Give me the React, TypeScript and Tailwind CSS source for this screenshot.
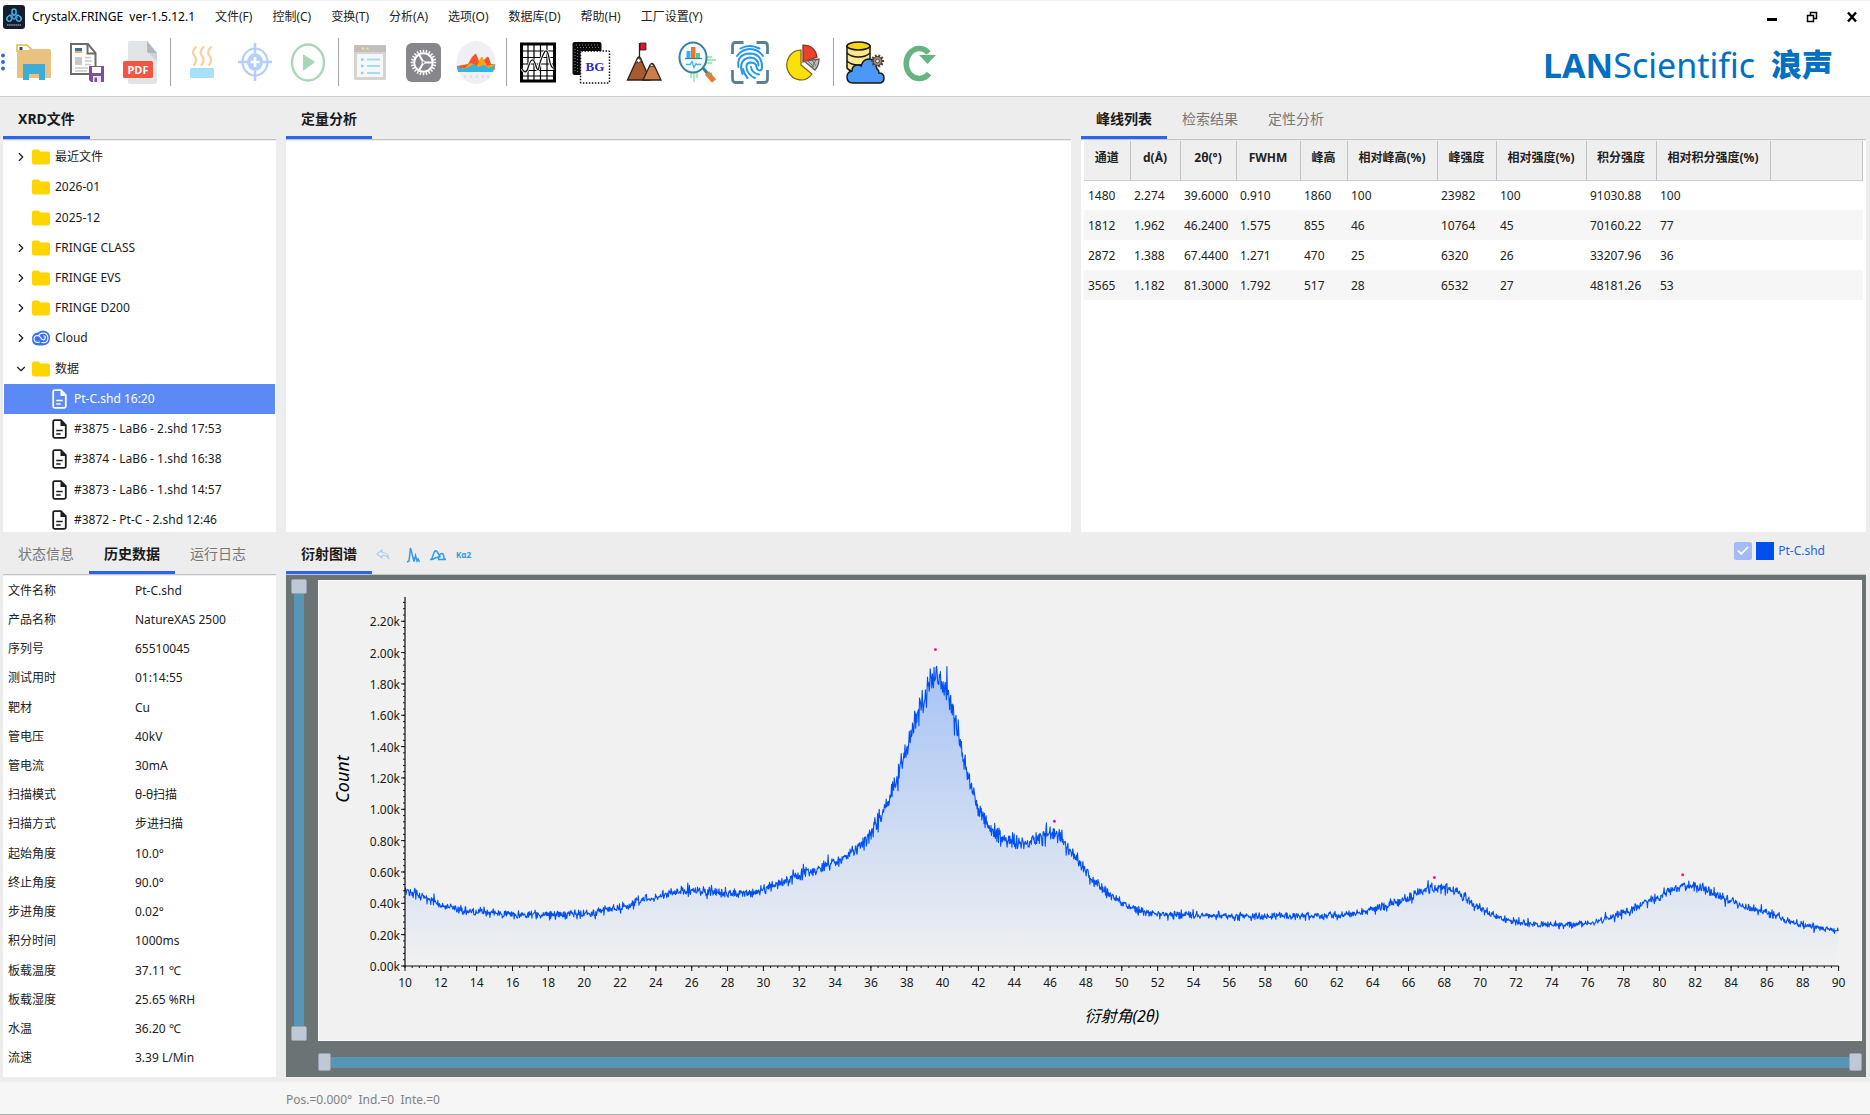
import { useState } from "react";
import type { ReactNode } from "react";
import { Check, ChevronDown, ChevronRight, Fingerprint } from "lucide-react";

/* ---------- toolbar icons (40 x 44 drawing area) ---------- */

function Ico({ children }: { children: ReactNode }) {
  return (
    <svg viewBox="0 0 40 44" className="h-11 w-10" aria-hidden="true">
      {children}
    </svg>
  );
}

const cog = (cx: number, cy: number, r: number, teeth: number, len: number) =>
  Array.from({ length: teeth }, (_, i) => {
    const a = (i / teeth) * Math.PI * 2;
    return `M${cx + Math.cos(a) * r} ${cy + Math.sin(a) * r}L${cx + Math.cos(a) * (r + len)} ${cy + Math.sin(a) * (r + len)}`;
  }).join("");

const OpenIcon = () => (
  <Ico>
    <path d="M3 12V5h10l6 6" fill="#fff" stroke="#e3bd3c" strokeWidth="1.6" />
    <path d="M5.500 7h3v3h-3z" fill="#1d4f86" />
    <path d="M3 10h10l5-1h16q3 0 3 2v26q0 1-1 1H3z" fill="#e8c27e" />
    <path d="M9 40V24h22v16h-6v-6H15v6z" fill="#3badd6" />
  </Ico>
);
const SaveIcon = () => (
  <Ico>
    <path d="M4 4h17l7.500 9v21H4z" fill="#fff" stroke="#6c6c6c" strokeWidth="2" />
    <path d="M20.500 4v9.500H29" fill="none" stroke="#6c6c6c" strokeWidth="2" />
    <path d="M8 8h7v4H8z" fill="#3a6ea5" />
    <path d="M8 11h7v2H8z" fill="#e9b55a" />
    <path d="M8 17h7v8H8z" fill="#c9c9c9" />
    <path d="M18 17.500h6M18 21h7M18 24.500h6M8 28h13M8 31h12" stroke="#c9c9c9" strokeWidth="1.400" />
    <path d="M22 26h15v16H24l-2-2z" fill="#7d4fa3" />
    <path d="M25 27h9v6h-9z" fill="#fff" />
    <path d="M26 36h8v6h-8z" fill="#efe6f5" />
    <path d="M27.500 37.500h2.500V42h-2.500z" fill="#7d4fa3" />
  </Ico>
);
const PdfIcon = () => (
  <Ico>
    <path d="M10 1h17l10 12v29q0 2-2 2H10q-2 0-2-2V3q0-2 2-2z" fill="#e2e5e7" />
    <path d="M27 1l10 12h-8q-2 0-2-2z" fill="#b0b7bd" />
    <path d="M29 13l8 9v-9z" fill="#cad1d8" />
    <rect x="3" y="21" width="30" height="17" rx="1.500" fill="#f15642" />
    <text x="18" y="33.500" textAnchor="middle" fontSize="11" fontWeight="700" fill="#fff" fontFamily="Noto Sans, sans-serif">PDF</text>
  </Ico>
);
const HeatIcon = () => (
  <Ico>
    <g fill="none" stroke="#fcd09a" strokeWidth="2.200" strokeLinecap="round">
      <path d="M14 7q-5 5-1.500 9t-.5 9" />
      <path d="M21.500 7q-5 5-1.500 9t-.5 9" />
      <path d="M29 7q-5 5-1.500 9t-.5 9" />
    </g>
    <rect x="8" y="28" width="24" height="10" rx="1.500" fill="#a6e1fb" />
  </Ico>
);
const TargetIcon = () => (
  <Ico>
    <g stroke="#b3d0fd" fill="none">
      <ellipse cx="20" cy="22" rx="12.500" ry="13.500" strokeWidth="2.200" />
      <path d="M20 3v10M20 31v10M3 22h9M28 22h9" strokeWidth="2.600" />
    </g>
    <ellipse cx="20" cy="22" rx="8" ry="9" fill="#b3d0fd" />
    <path d="M20 17v10M15.500 22h9" stroke="#fff" strokeWidth="2.600" />
  </Ico>
);
const PlayIcon = () => (
  <Ico>
    <ellipse cx="20" cy="22.500" rx="16" ry="18" fill="none" stroke="#a9d8b8" strokeWidth="2.400" />
    <path d="M15.500 15l11 7-11 8z" fill="#a4d8b6" stroke="#a4d8b6" strokeLinejoin="round" />
  </Ico>
);
const ListIcon = () => (
  <Ico>
    <rect x="4" y="5" width="32" height="35" rx="1.500" fill="#d7d3d0" />
    <path d="M4 6.500Q4 5 5.500 5h29Q36 5 36 6.500V12H4z" fill="#c2bfbf" />
    <circle cx="8.500" cy="8.500" r="1.300" fill="#f5a3a0" />
    <circle cx="13" cy="8.500" r="1.300" fill="#f7e08a" />
    <circle cx="17.500" cy="8.500" r="1.300" fill="#d9e98a" />
    <path d="M7 14h26v23H7z" fill="#f5f7f9" />
    <path d="M17 19.500h13M17 26h13M17 33h13" stroke="#a9dcea" strokeWidth="2" />
    <path d="M11 19.500h2.500M11 26h2.500M11 33h2.500" stroke="#8fcdf0" strokeWidth="2.400" />
  </Ico>
);
const GearIcon = () => (
  <Ico>
    <rect x="3" y="3" width="35" height="39" rx="6" fill="#87868c" />
    <path d={cog(20.5, 22.5, 10, 24, 2.8)} stroke="#fff" strokeWidth="1.500" />
    <circle cx="20.500" cy="22.500" r="9.300" fill="none" stroke="#fff" strokeWidth="2" />
    <path d="M20.500 22.500h9M20.500 22.500l-4.500-8M20.500 22.500l-4.500 8" stroke="#fff" strokeWidth="2" />
    <circle cx="20.500" cy="22.500" r="1.500" fill="#87868c" stroke="#fff" />
  </Ico>
);
const AreaIcon = () => (
  <Ico>
    <ellipse cx="20" cy="22.500" rx="19.500" ry="21.500" fill="#eff0f4" />
    <path d="M1 26l6-1 5-1 4-7 3-3q1-1 2 2l3 8 3-3 4-4q1-1 2 1l2 6 4 0v5L20 31 2 30z" fill="#f4552b" />
    <path d="M1 28l8 0 4-4 3-1 4 5 5-11q1-1 2 1l4 8 3-1 5-1v6H2z" fill="#ffa412" />
    <path d="M1 26l6 3 6-2 5-3 4 3 6-2 5 3 6-3q0 3-2 7H2q-1-4-1-6z" fill="#33b5e0" />
    <path d="M9 35v3M15 35v3M21 35v3M27 35v3M32 35v3" stroke="#cfd1d8" />
  </Ico>
);
const GridIcon = () => (
  <Ico>
    <rect x="3.500" y="4" width="33" height="37" fill="#fff" stroke="#000" strokeWidth="3" />
    <path d="M10 4v37M16 4v37M22.500 4v37M29 4v37M4 11h32M4 17.500h32M4 24h32M4 30.500h32M4 36h32" stroke="#000" strokeWidth="1.200" />
    <path d="M4 29q4 6 6-1t4-8 4 6 3 1 5-14q3-6 5 5t5 10" fill="none" stroke="#fff" strokeWidth="2.800" />
    <path d="M4 29q4 6 6-1t4-8 4 6 3 1 5-14q3-6 5 5t5 10" fill="none" stroke="#111" strokeWidth="1.300" />
  </Ico>
);
const BgIcon = () => (
  <Ico>
    <rect x="1.500" y="2" width="29" height="33" rx="2" fill="#0a0a0a" />
    <path d="M5 5h24M6 7.500h23M4 9v24M6.500 10v22" stroke="#9a9a9a" strokeWidth=".8" strokeDasharray="1 2" />
    <rect x="9.500" y="11" width="29" height="32" rx="1" fill="#fff" stroke="#111" strokeWidth="1.500" strokeDasharray="1.500 1.500" />
    <text x="24" y="31" textAnchor="middle" fontSize="13" fontWeight="700" fill="#2a2ad8" fontFamily="Liberation Serif, serif">BG</text>
  </Ico>
);
const PeakIcon = () => (
  <Ico>
    <path d="M15.500 18V3" stroke="#222" strokeWidth="1.300" />
    <path d="M16 3h6v7h-6z" fill="#e8112d" stroke="#222" strokeWidth=".8" />
    <path d="M3.500 40L13 19q2-4 4 0l9 21z" fill="#a95b2c" stroke="#2b211c" strokeWidth="1.300" />
    <path d="M11.500 22.500q3-8 6.500 0l-2-1-1.500 2-1-2z" fill="#fff" stroke="#2b211c" strokeWidth=".8" />
    <path d="M19 40l7-15q2-3 4 0l7 15z" fill="#d07d4c" stroke="#2b211c" strokeWidth="1.300" />
    <path d="M25.500 27q2-6 5 0l-2.500-1z" fill="#fff" stroke="#2b211c" strokeWidth=".8" />
  </Ico>
);
const SearchChartIcon = () => (
  <Ico>
    <path d="M29 17h6M30 20h9M29 23h6M14 33v5M17 33v9M20 33v5" stroke="#7fe3a4" strokeWidth="1.300" />
    <path d="M26 28l5 6" stroke="#3d7e9f" strokeWidth="3" />
    <path d="M30 33l7 8" stroke="#f47a2b" strokeWidth="5.500" />
    <path d="M31 37l4-4" stroke="#48c77a" strokeWidth="1.300" />
    <ellipse cx="16" cy="17.500" rx="13.500" ry="15" fill="#f1faff" stroke="#3d7e9f" strokeWidth="2" />
    <path d="M9.500 11h4v7h-4z" fill="#2fb6e8" />
    <path d="M14 7h4.500v11H14z" fill="#f4702b" />
    <path d="M19 13h4v5h-4z" fill="#4fd08b" />
    <path d="M8 18.500h17" stroke="#3d7e9f" strokeWidth="1.200" />
    <path d="M9 24.500h4l2-3 2 6 2-4 1 1h4" fill="none" stroke="#3db4e6" strokeWidth="1.300" />
  </Ico>
);
const FingerIcon = () => (
  <Ico>
    <g fill="none" stroke="#5d7f92" strokeWidth="2.800">
      <path d="M2.500 14V6q0-3.500 3-3.500h8M26.500 2.500h8q3 0 3 3.500v8M37.500 30v8.500q0 4-3 4h-8M13.500 42.500h-8q-3 0-3-4V30" />
    </g>
    <g fill="none" stroke="#2196f3" strokeWidth="2" strokeLinecap="round">
      <path d="M10.500 8.500q9-5 19 0" />
      <path d="M7 16q5-7 13-7t13 7" />
      <path d="M8.500 27q-2-13 11.500-13.500Q32 14 32 27q0 3-2 3.500-3 0-3.500-4Q26 22.500 20 22.500q-4 .5-3.500 5Q17.500 35 25 38" />
      <path d="M12.500 34q-2-6-1-10 2-6 8.500-6.500 8 .5 8.500 8" />
      <path d="M17.500 38q-3.500-4-4.500-9" />
      <path d="M21 27q.5 6 8 7.500" />
    </g>
  </Ico>
);
const PieIcon = () => (
  <Ico>
    <path d="M18 25V10A14 15 0 1 0 29 34z" fill="#fbe10a" stroke="#7a5c10" strokeWidth="1.200" />
    <path d="M20 22V5q12 0 14 12z" fill="#e8432a" stroke="#8a2a1a" strokeWidth="1.200" />
    <path d="M21 21l15-2q0 7-4 11z" fill="#a9c3cc" stroke="#7a5648" strokeWidth="1.300" />
    <path d="M25 21l6 6M29 20l4 6M33 20l-4 7" stroke="#7a5648" strokeWidth=".8" />
  </Ico>
);
const CloudDbIcon = () => (
  <Ico>
    <path d="M2 6v22q3 4 11 4t12-4V6z" fill="#fbe88e" stroke="#161616" strokeWidth="1.500" />
    <path d="M2 13q4 4 11.500 4T25 13M2 21q4 4 11.500 4T25 21" fill="none" stroke="#161616" strokeWidth="1.300" />
    <ellipse cx="13.500" cy="6" rx="11.500" ry="4" fill="#f7d417" stroke="#161616" strokeWidth="1.500" />
    <path d="M8 43q-6 0-6-6 0-5 5-6 0-6 6-6 2 0 3 1 2-7 8-7 7 0 8 10 2 1 2 4 5 0 5 5t-5 5z" fill="#4a98f7" stroke="#161616" strokeWidth="1.500" />
    <path d={cog(32.5, 21, 4, 10, 2.6)} stroke="#55463a" strokeWidth="2" />
    <circle cx="32.500" cy="21" r="4.500" fill="#a08b76" stroke="#3d3229" />
    <circle cx="32.500" cy="21" r="1.800" fill="#f5ede4" stroke="#3d3229" strokeWidth=".8" />
  </Ico>
);
const RefreshIcon = () => (
  <Ico>
    <path d="M31 33.500A13 15 0 1 1 30.500 13" fill="none" stroke="#67b57e" strokeWidth="5.600" />
    <path d="M21 15h17l-8.500 9z" fill="#67b57e" />
  </Ico>
);

type Tool = { label: string; icon: ReactNode };
const toolGroups: Tool[][] = [
  [
    { label: "打开", icon: <OpenIcon /> },
    { label: "保存", icon: <SaveIcon /> },
    { label: "导出PDF", icon: <PdfIcon /> },
  ],
  [
    { label: "预热", icon: <HeatIcon /> },
    { label: "校准", icon: <TargetIcon /> },
    { label: "开始", icon: <PlayIcon /> },
  ],
  [
    { label: "参数", icon: <ListIcon /> },
    { label: "设置", icon: <GearIcon /> },
    { label: "图谱", icon: <AreaIcon /> },
  ],
  [
    { label: "平滑", icon: <GridIcon /> },
    { label: "背景", icon: <BgIcon /> },
    { label: "寻峰", icon: <PeakIcon /> },
    { label: "检索", icon: <SearchChartIcon /> },
    { label: "指纹", icon: <FingerIcon /> },
    { label: "定量", icon: <PieIcon /> },
  ],
  [
    { label: "数据库", icon: <CloudDbIcon /> },
    { label: "刷新", icon: <RefreshIcon /> },
  ],
];

const menus = ["文件(F)", "控制(C)", "变换(T)", "分析(A)", "选项(O)", "数据库(D)", "帮助(H)", "工厂设置(Y)"];

function AppLogo() {
  return (
    <svg viewBox="0 0 22 24" className="h-6 w-[22px]" aria-hidden="true">
      <rect width="22" height="24" rx="3" fill="#141c2e" />
      <g fill="none" stroke="#35c3dc" strokeWidth="1.500" strokeLinejoin="round">
        <path d="M9 8.500V6q0-2 2-2t2 2v2.500l-2 2z" />
        <path d="M9.500 12l-1.500 3.500q-2 1.500-3.500 0t0-3.500l2.500-2z" />
        <path d="M12.500 12l1.500 3.500q2 1.500 3.500 0t0-3.500L15 10z" />
        <path d="M9 9.500h4l1 3-3 1.500-3-1.500z" stroke="#4f8ff0" />
      </g>
      <path d="M4 20h14" stroke="#8d94a3" strokeWidth="1.400" strokeDasharray="1.500 .6" />
    </svg>
  );
}

function Header() {
  return (
    <header className="flex h-[97px] shrink-0 flex-col border-b border-[#cfcfcf] bg-white">
      <div className="flex h-8 items-center border-t border-[#f0f0f0] pl-[3px] pr-3">
        <AppLogo />
        <h1 className="ml-[7px] whitespace-pre text-[12px] text-black">CrystalX.FRINGE  ver-1.5.12.1</h1>
        <nav className="ml-5 flex gap-5">
          {menus.map((m) => (
            <button key={m} type="button" className="text-[12px] text-[#222]">
              {m}
            </button>
          ))}
        </nav>
        <div className="ml-auto flex items-center gap-7">
          <button type="button" aria-label="最小化">
            <svg viewBox="0 0 12 12" className="size-3"><path d="M1 8.500h10" stroke="#000" strokeWidth="3" /></svg>
          </button>
          <button type="button" aria-label="还原">
            <svg viewBox="0 0 12 12" className="size-3" fill="none" stroke="#000" strokeWidth="1.500">
              <path d="M1.500 4.500h6v6h-6zM4.500 4V1.500h6v6H8" />
            </svg>
          </button>
          <button type="button" aria-label="关闭">
            <svg viewBox="0 0 12 12" className="size-3"><path d="M2 1.500l8 9M10 1.500l-8 9" stroke="#000" strokeWidth="2.400" /></svg>
          </button>
        </div>
      </div>
      <div className="flex flex-1 items-center pb-1 pr-[37px]">
        <svg viewBox="0 0 7 20" className="h-5 w-[7px] shrink-0" fill="#2b63f6" aria-hidden="true">
          <circle cx="3" cy="3.500" r="1.900" />
          <circle cx="3" cy="10" r="1.900" />
          <circle cx="3" cy="16.500" r="1.900" />
        </svg>
        {toolGroups.map((group, i) => (
          <div key={i} className="flex items-center">
            {i > 0 && <div className="mx-1 h-12 w-px bg-[#a3a3a3]" />}
            {group.map((t) => (
              <button key={t.label} type="button" aria-label={t.label} className="flex w-[53px] justify-center">
                {t.icon}
              </button>
            ))}
          </div>
        ))}
        <div className="ml-auto flex items-center gap-4 whitespace-nowrap pt-[5px] leading-none text-[#0071c2]">
          <span className="text-[34px]">
            <b className="font-bold">LAN</b>Scientific
          </span>
          <span className="text-[31px] font-black">浪声</span>
        </div>
      </div>
    </header>
  );
}

/* ---------- tab strip ---------- */

function Tabs({ items, initial = 0, children }: { items: string[]; initial?: number; children?: ReactNode }) {
  const [active, setActive] = useState(initial);
  return (
    <div className="flex h-[43px] shrink-0 items-stretch border-b border-[#c3c3c3]" role="tablist">
      {items.map((t, i) => (
        <button
          key={t}
          type="button"
          role="tab"
          aria-selected={i === active}
          onClick={() => setActive(i)}
          className={
            i === active
              ? "border-b-3 border-[#2b63f6] px-[15px] pt-[3px] text-[14px] font-bold text-[#1a1a1a]"
              : "border-b-3 border-transparent px-[15px] pt-[3px] text-[14px] text-[#777]"
          }
        >
          {t}
        </button>
      ))}
      {children}
    </div>
  );
}

/* ---------- file tree ---------- */

type Node = { label: string; kind: "folder" | "cloud" | "file"; arrow?: "right" | "down"; selected?: boolean };
const nodes: Node[] = [
  { label: "最近文件", kind: "folder", arrow: "right" },
  { label: "2026-01", kind: "folder" },
  { label: "2025-12", kind: "folder" },
  { label: "FRINGE CLASS", kind: "folder", arrow: "right" },
  { label: "FRINGE EVS", kind: "folder", arrow: "right" },
  { label: "FRINGE D200", kind: "folder", arrow: "right" },
  { label: "Cloud", kind: "cloud", arrow: "right" },
  { label: "数据", kind: "folder", arrow: "down" },
  { label: "Pt-C.shd 16:20", kind: "file", selected: true },
  { label: "#3875 - LaB6 - 2.shd 17:53", kind: "file" },
  { label: "#3874 - LaB6 - 1.shd 16:38", kind: "file" },
  { label: "#3873 - LaB6 - 1.shd 14:57", kind: "file" },
  { label: "#3872 - Pt-C - 2.shd 12:46", kind: "file" },
];

function NodeIcon({ kind }: { kind: Node["kind"] }) {
  if (kind === "folder")
    return (
      <svg viewBox="0 0 18 16" className="h-4 w-[18px]" aria-hidden="true">
        <path d="M0 2.500Q0 .5 2 .5h4.500L8.500 2.500H16q2 0 2 2v9q0 2-2 2H2q-2 0-2-2z" fill="#ffd500" />
      </svg>
    );
  if (kind === "cloud")
    return (
      <svg viewBox="0 0 18 16" className="h-4 w-[18px]" aria-hidden="true">
        <path d="M6 2.500Q8 .5 11 .5q7 .5 7 7.500t-7 7.500H6Q0 15 0 9t6-6.500z" fill="#3b71f3" />
        <path d="M9.500 12.500q6.500 1 6.500-4.500-.5-5-5-5-3.500.2-4.500 3M8 12q-5.500 1.500-6-3 .2-3.500 3.500-3.500 2 .2 3 2t2.500 2.300 2.200-1.800-1.800-2" fill="none" stroke="#fff" strokeWidth="1.100" />
      </svg>
    );
  return (
    <svg viewBox="0 0 15 20" className="h-5 w-[15px]" aria-hidden="true">
      <path d="M2.500 1.200H9L13.800 6v11.300q0 1.500-1.500 1.500h-9.800q-1.300 0-1.300-1.500V2.700q0-1.500 1.300-1.500z" fill="none" stroke="currentColor" strokeWidth="1.800" />
      <path d="M8.500 1v6H14z" fill="currentColor" />
      <path d="M4.200 11.500h6.500M4.200 15h4.500" stroke="currentColor" strokeWidth="1.500" />
    </svg>
  );
}

function FileTree() {
  return (
    <section className="flex min-h-0 flex-col">
      <Tabs items={["XRD文件"]} />
      <div className="mt-px min-h-0 flex-1 overflow-hidden bg-white px-px pt-px">
        <ul className="grid h-[393px] auto-rows-fr">
          {nodes.map((n) => (
            <li
              key={n.label}
              className={n.selected ? "flex items-center bg-[#5b8af7] text-white" : "flex items-center text-[#1c1c1c]"}
            >
              {n.kind === "file" ? (
                <span className="w-12" />
              ) : (
                <span className="flex w-7 justify-end pr-1">
                  {n.arrow === "right" && <ChevronRight className="size-3.5" strokeWidth={2} />}
                  {n.arrow === "down" && <ChevronDown className="size-3.5" strokeWidth={2} />}
                </span>
              )}
              <NodeIcon kind={n.kind} />
              <span className={n.kind === "file" ? "ml-[7px] text-[12px]" : "ml-[5px] text-[12px]"}>{n.label}</span>
            </li>
          ))}
        </ul>
      </div>
    </section>
  );
}

/* ---------- peak table ---------- */

const columns: [string, string][] = [
  ["通道", "w-[46px]"],
  ["d(Å)", "w-[50px]"],
  ["2θ(°)", "w-[56px]"],
  ["FWHM", "w-[64px]"],
  ["峰高", "w-[47px]"],
  ["相对峰高(%)", "w-[90px]"],
  ["峰强度", "w-[59px]"],
  ["相对强度(%)", "w-[90px]"],
  ["积分强度", "w-[70px]"],
  ["相对积分强度(%)", "w-[114px]"],
];
const peaks = [
  ["1480", "2.274", "39.6000", "0.910", "1860", "100", "23982", "100", "91030.88", "100"],
  ["1812", "1.962", "46.2400", "1.575", "855", "46", "10764", "45", "70160.22", "77"],
  ["2872", "1.388", "67.4400", "1.271", "470", "25", "6320", "26", "33207.96", "36"],
  ["3565", "1.182", "81.3000", "1.792", "517", "28", "6532", "27", "48181.26", "53"],
];

function PeakPanel() {
  return (
    <section className="flex min-h-0 min-w-0 flex-col">
      <Tabs items={["峰线列表", "检索结果", "定性分析"]} />
      <div className="mt-px min-h-0 flex-1 overflow-hidden bg-white px-[3px]">
        <table className="w-full table-fixed border-collapse text-[12px] text-[#222]">
          <thead>
            <tr className="h-[39px] border-b border-[#cfcfcf] bg-[#efefef]">
              {columns.map(([c, w]) => (
                <th key={c} scope="col" className={`${w} whitespace-nowrap border-r border-[#c2c2c2] p-0 pb-1 text-center font-bold`}>
                  {c}
                </th>
              ))}
              <td className="border-r border-[#c2c2c2]" />
            </tr>
          </thead>
          <tbody>
            {peaks.map((row) => (
              <tr key={row[0]} className="h-[30px] even:bg-[#f6f6f6]">
                {row.map((v, i) => (
                  <td key={i} className="whitespace-nowrap p-0 pl-1 pt-[2px]">
                    {v}
                  </td>
                ))}
                <td />
              </tr>
            ))}
          </tbody>
        </table>
      </div>
    </section>
  );
}

/* ---------- history info ---------- */

const info: [string, string][] = [
  ["文件名称", "Pt-C.shd"],
  ["产品名称", "NatureXAS 2500"],
  ["序列号", "65510045"],
  ["测试用时", "01:14:55"],
  ["靶材", "Cu"],
  ["管电压", "40kV"],
  ["管电流", "30mA"],
  ["扫描模式", "θ-θ扫描"],
  ["扫描方式", "步进扫描"],
  ["起始角度", "10.0°"],
  ["终止角度", "90.0°"],
  ["步进角度", "0.02°"],
  ["积分时间", "1000ms"],
  ["板载温度", "37.11 ℃"],
  ["板载湿度", "25.65 %RH"],
  ["水温", "36.20 ℃"],
  ["流速", "3.39 L/Min"],
];

function InfoPanel() {
  return (
    <section className="flex min-h-0 flex-col">
      <Tabs items={["状态信息", "历史数据", "运行日志"]} initial={1} />
      <div className="mt-px min-h-0 flex-1 overflow-hidden bg-white">
        <dl className="grid h-[497px] auto-rows-fr text-[12px] text-[#222]">
          {info.map(([k, v]) => (
            <div key={k} className="flex items-center pl-[5px]">
              <dt className="w-[127px]">{k}</dt>
              <dd>{v}</dd>
            </div>
          ))}
        </dl>
      </div>
    </section>
  );
}

/* ---------- diffraction chart ---------- */

const X0 = 86;
const Y0 = 385;
const XS = 17.92;
const YS = 156.7;
const px = (deg: number) => X0 + (deg - 10) * XS;
const py = (k: number) => Y0 - k * YS;

const curve: [number, number][] = [
  [10, 0.48], [11, 0.44], [12, 0.39], [14, 0.345], [16, 0.33], [18, 0.33], [20, 0.335], [22, 0.375], [24, 0.44],
  [26, 0.48], [28, 0.463], [29, 0.46], [30, 0.485], [31, 0.53], [32, 0.575], [33, 0.62], [34, 0.67], [35, 0.735], [36, 0.85], [37, 1.07],
  [38, 1.39], [38.5, 1.58], [39, 1.74], [39.6, 1.86], [40, 1.82], [40.5, 1.66], [41, 1.4], [41.5, 1.19], [42, 1.02], [42.5, 0.91],
  [43, 0.85], [44, 0.79], [45, 0.8], [46, 0.84], [46.5, 0.835], [47, 0.755], [48, 0.6], [49, 0.49], [50, 0.405],
  [51, 0.357], [52, 0.33], [54, 0.325], [56, 0.32], [60, 0.32], [62, 0.323], [64, 0.36], [65, 0.395], [66, 0.435], [67, 0.485],
  [68, 0.5], [69, 0.45], [70, 0.367], [71, 0.31], [72, 0.28], [74, 0.262], [76, 0.275], [77, 0.3], [78, 0.34],
  [79, 0.39], [80, 0.44], [81, 0.5], [81.6, 0.51], [82.5, 0.49], [84, 0.41], [86, 0.34], [88, 0.265], [90, 0.225],
];

/* cubic Hermite interpolation through the control points */
function base(x: number) {
  let i = 0;
  while (i < curve.length - 2 && x > curve[i + 1][0]) i++;
  const at = (j: number) => curve[Math.max(0, Math.min(curve.length - 1, j))];
  const [xa, ya] = at(i);
  const [xb, yb] = at(i + 1);
  const [xp, yp] = at(i - 1);
  const [xn, yn] = at(i + 2);
  const h = xb - xa;
  const ma = (yb - yp) / (xb - xp);
  const mb = (yn - ya) / (xn - xa);
  const t = (x - xa) / h;
  const t2 = t * t;
  const t3 = t2 * t;
  return (2 * t3 - 3 * t2 + 1) * ya + (t3 - 2 * t2 + t) * h * ma + (3 * t2 - 2 * t3) * yb + (t3 - t2) * h * mb;
}

/* counting noise from a fixed seed, so the trace is the same on every load */
const tracePath = (() => {
  let seed = 90210;
  const rnd = () => {
    seed = (seed + 0x6d2b79f5) | 0;
    let t = Math.imul(seed ^ (seed >>> 15), 1 | seed);
    t = (t + Math.imul(t ^ (t >>> 7), 61 | t)) ^ t;
    return ((t ^ (t >>> 14)) >>> 0) / 4294967296;
  };
  const pts: string[] = [];
  for (let i = 0; i <= 2666; i++) {
    const x = 10 + i * 0.03;
    const b = base(x);
    const gauss = Math.sqrt(-2 * Math.log(1 - rnd())) * Math.cos(2 * Math.PI * rnd());
    pts.push(`${px(x).toFixed(1)} ${py(b + gauss * 0.031 * Math.pow(b, 0.75)).toFixed(1)}`);
  }
  return "M" + pts.join("L");
})();

const xMajor = Array.from({ length: 41 }, (_, i) => 10 + i * 2);
const yMajor = Array.from({ length: 12 }, (_, i) => i * 0.2);
const xMinor = Array.from({ length: 201 }, (_, i) => `M${px(10 + i * 0.4)} ${Y0}v2`).join("");
const yMinor = Array.from({ length: 59 }, (_, i) => `M${X0} ${py(i * 0.04)}h-2`).join("");
const markers: [number, number][] = [[39.6, 2.02], [46.24, 0.924], [67.44, 0.565], [81.3, 0.583]];

function Chart() {
  return (
    <svg viewBox="0 0 1542 459" className="h-full w-full" role="img" aria-label="衍射图谱 Pt-C.shd">
      <defs>
        <linearGradient id="fill" gradientUnits="userSpaceOnUse" x1="0" y1={py(2)} x2="0" y2={Y0}>
          <stop offset="0" stopColor="#0a62ff" stopOpacity="0.34" />
          <stop offset="1" stopColor="#0a62ff" stopOpacity="0" />
        </linearGradient>
      </defs>
      <path d={`${tracePath}L${px(90)} ${Y0}L${X0} ${Y0}Z`} fill="url(#fill)" />
      <path d={tracePath} fill="none" stroke="#0050f5" strokeWidth="1.100" strokeLinejoin="round" />
      {markers.map(([x, y]) => (
        <circle key={x} cx={px(x)} cy={py(y)} r="1.500" fill="#ff1493" />
      ))}
      <g stroke="#111" strokeWidth="1" fill="none">
        <path d={`M${X0} 16V${Y0}H${px(90)}`} strokeWidth="1.200" />
        <path d={xMinor} />
        <path d={yMinor} />
        <path d={xMajor.map((v) => `M${px(v)} ${Y0}v5`).join("")} />
        <path d={yMajor.map((v) => `M${X0} ${py(v)}h-4`).join("")} />
      </g>
      <g fontSize="12" fill="#1a1a1a">
        {xMajor.map((v) => (
          <text key={v} x={px(v)} y={Y0 + 21} textAnchor="middle">
            {v}
          </text>
        ))}
        {yMajor.map((v) => (
          <text key={v} x={X0 - 5} y={py(v) + 5} textAnchor="end">
            {v.toFixed(2)}k
          </text>
        ))}
      </g>
      <g fontStyle="italic" fill="#000" textAnchor="middle">
        <text transform="translate(30 198) rotate(-90)" fontSize="18">
          Count
        </text>
        <text x={px(50)} y={Y0 + 56} fontSize="16">
          衍射角(2θ)
        </text>
      </g>
    </svg>
  );
}

const hThumb =
  "pointer-events-none w-full appearance-none bg-transparent [grid-area:1/1] [&::-webkit-slider-thumb]:pointer-events-auto [&::-webkit-slider-thumb]:h-[18px] [&::-webkit-slider-thumb]:w-[13px] [&::-webkit-slider-thumb]:appearance-none [&::-webkit-slider-thumb]:rounded-[2px] [&::-webkit-slider-thumb]:border [&::-webkit-slider-thumb]:border-[#98a3b3] [&::-webkit-slider-thumb]:bg-[#bfc8d5]";
const vThumb =
  "pointer-events-none h-full w-4 appearance-none bg-transparent [grid-area:1/1] [writing-mode:vertical-lr] [&::-webkit-slider-thumb]:pointer-events-auto [&::-webkit-slider-thumb]:h-[15px] [&::-webkit-slider-thumb]:w-4 [&::-webkit-slider-thumb]:appearance-none [&::-webkit-slider-thumb]:rounded-[2px] [&::-webkit-slider-thumb]:border [&::-webkit-slider-thumb]:border-[#98a3b3] [&::-webkit-slider-thumb]:bg-[#bfc8d5]";

function ChartPanel() {
  return (
    <section className="col-span-2 flex min-h-0 min-w-0 flex-col">
      <Tabs items={["衍射图谱"]}>
        <div className="flex items-center pl-[2px] pt-1 text-[#2f9bf0]">
          <button type="button" aria-label="撤销" className="flex w-[18px] justify-center">
            <svg viewBox="0 0 14 12" className="h-3 w-3.5" fill="none" stroke="#a9d0f0" strokeWidth="1.200">
              <path d="M6 1L1 5l5 4V6.500q5-.5 7 4Q13 4 6 3.500z" />
            </svg>
          </button>
          <button type="button" aria-label="寻峰" className="ml-3 flex w-[18px] justify-center">
            <svg viewBox="0 0 14 16" className="h-4 w-3.5" fill="none" stroke="currentColor" strokeWidth="1.500">
              <path d="M1 15l2-1L4.500 1 8 14.500l1.500-6L11 14l1-2 1.500 3" />
            </svg>
          </button>
          <button type="button" aria-label="拟合" className="ml-[7px] flex w-[18px] justify-center">
            <svg viewBox="0 0 16 12" className="h-3 w-4" fill="none" stroke="currentColor" strokeWidth="1.500">
              <path d="M0 10.500h1.500l3-8q1-1.500 2.500 0l3 5q-4 1-8 3M8.500 10q1-6 3.500-5.500 2 .5 2 5l2 1H8" />
            </svg>
          </button>
          <button type="button" className="ml-[9px] text-[8px] font-bold">
            Kα2
          </button>
        </div>
        <label className="ml-auto mr-[41px] flex items-center gap-1 pb-1 text-[12px] text-[#1f5ff5]">
          <span className="grid">
            <input type="checkbox" defaultChecked className="peer size-[18px] appearance-none rounded-[2px] bg-[#a5bbf3] [grid-area:1/1]" />
            <Check className="invisible size-[18px] p-[2px] text-white [grid-area:1/1] peer-checked:visible" strokeWidth={3} />
          </span>
          <span className="size-[18px] bg-[#0050f0]" />
          Pt-C.shd
        </label>
      </Tabs>
      <div className="flex min-h-0 flex-1 flex-col bg-[#6b7374] pr-1 pt-1">
        <div className="flex min-h-0 flex-1">
          <div className="w-8 shrink-0 pl-[5px]">
            <div className="grid h-full w-4 grid-rows-1 justify-items-center">
              <div className="my-2 w-2.5 bg-[#5896b8] [grid-area:1/1]" />
              <input type="range" aria-label="纵轴上限" defaultValue={0} className={vThumb} />
              <input type="range" aria-label="纵轴下限" defaultValue={100} className={vThumb} />
            </div>
          </div>
          <div className="mt-px min-w-0 flex-1 border border-[#fafafa] bg-[#f1f1f1]">
            <Chart />
          </div>
        </div>
        <div className="grid h-9 grid-cols-1 items-center pl-8 pt-[6px]">
          <div className="mx-2 h-[11px] bg-[#5896b8] [grid-area:1/1]" />
          <input type="range" aria-label="横轴下限" defaultValue={0} className={hThumb} />
          <input type="range" aria-label="横轴上限" defaultValue={100} className={hThumb} />
        </div>
      </div>
    </section>
  );
}

export default function App() {
  return (
    <div className="flex h-screen flex-col bg-[#ededed] font-['Noto_Sans','Noto_Sans_CJK_SC',sans-serif]">
      <Header />
      <main className="grid min-h-0 flex-1 grid-cols-[273px_1fr_1fr] grid-rows-[435fr_545fr] gap-x-[10px] pl-[3px] pr-1">
        <FileTree />
        <section className="flex min-h-0 min-w-0 flex-col">
          <Tabs items={["定量分析"]} />
          <div className="mt-px flex-1 bg-white" />
        </section>
        <PeakPanel />
        <InfoPanel />
        <ChartPanel />
      </main>
      <footer className="mt-[5px] flex h-[33px] shrink-0 items-center border-b border-[#a8adad] bg-[#f6f6f6] pl-[286px] pt-1 text-[12px] text-[#808080]">
        <span className="whitespace-pre">Pos.=0.000°  Ind.=0  Inte.=0</span>
      </footer>
    </div>
  );
}
